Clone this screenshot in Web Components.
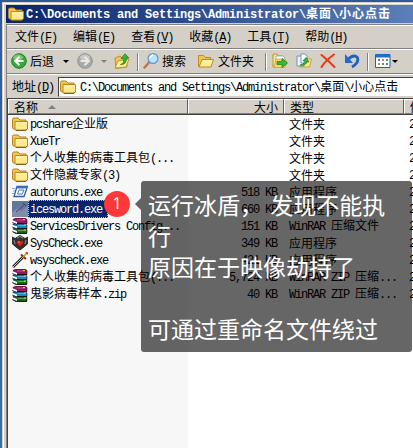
<!DOCTYPE html>
<html lang="zh-CN">
<head>
<meta charset="utf-8">
<title>Explorer</title>
<style>
html,body{margin:0;width:413px;height:448px;overflow:hidden;background:#3a6ea5}
</style>
</head>
<body>
<explorer-window></explorer-window>
<script>
const path = 'C:\\Documents and Settings\\Administrator\\桌面\\小心点击';

class PixelIcon extends HTMLElement {
  connectedCallback() {
    const folder = `<path d="M.5 3.5Q.5 2 2 2h4l2 2h6v9H2Q.5 13 .5 11z" fill="#f5c54b" stroke="#b58422"/><path d="M3 5.500h12.500v7L14 14H3z" fill="#ffe98d" stroke="#b98a22"/><path d="M4 7h10.500" stroke="#fff8c8"/><path d="M4 14.500h10l1.500-2" stroke="#80601c" fill="none"/>`;
    const openFolder = `<path d="M.5 13.500V2.500h5l1.500 2h5.500v3" fill="#f5c54b" stroke="#c08d25"/><path d="M1 14 4 6.500h11.500L13 14z" fill="#ffec91" stroke="#b98a22"/><path d="M5 8h9" stroke="#fffbd2"/>`;
    const rar = `<path d="M1 1.500 4 0h9l2 1.500v4L13 6H4L1 4.500z" fill="#97145e" stroke="#300" stroke-width=".6"/><path d="M1 6h12l2 1v3.500H4L1 9z" fill="#168ac5" stroke="#013" stroke-width=".6"/><path d="M1 10.500h12l2 1V15l-1 .7H4L1 14z" fill="#187018" stroke="#020" stroke-width=".6"/><path d="M0 2l5 2v2L0 4zM0 6.700l5 1.700v2L0 8.500zM0 11l5 2v2l-5-2z" fill="#fff"/><path d="M0 4.500l5 2M0 9l5 2M0 13.500l5 2" stroke="#222" stroke-width=".6"/><path d="M5 5.500h10M5 10.500h10M5 15.300h10" stroke="#111"/><path d="M5 2h8M6 7.500h8M6 12.500h8" stroke="#fff" stroke-opacity=".4" stroke-width=".8"/><path d="M11 1.500h2M12 7h2M12 12h2" stroke="#e0c34a"/>`;
    const green = `stroke="#187d1b" stroke-width=".7" fill="#38b838"`;
    const art = {
      folder, rar, openFolder,
      back: `<circle cx="8" cy="8" r="7.300" fill="#36a936" stroke="#1e8425"/><ellipse cx="7" cy="4.500" rx="5" ry="3" fill="#8bdc79" opacity=".7"/><path d="M8.500 3.800 4.300 8l4.200 4.200M4.800 8h7.700" stroke="#fff" stroke-width="2.200" fill="none"/>`,
      forward: `<circle cx="8" cy="8" r="7.300" fill="#a8a8a6" stroke="#92928f"/><ellipse cx="8" cy="4.500" rx="5" ry="3" fill="#c8c8c6"/><path d="M7.500 3.800 11.700 8l-4.200 4.200M11.200 8H3.500" stroke="#e8e8e6" stroke-width="2.200" fill="none"/>`,
      up: `<path d="M1 5l5-2 2 2h5v9l-11 1.500z" fill="#f0c64f" stroke="#b28425" stroke-width=".8"/><path d="M1 15 4 8l11-2-3 8z" fill="#ffec91" stroke="#b98a22" stroke-width=".8"/><path d="M6.500 11.500q4-1 3-6H7L11 .7 14.800 5h-2.500q.5 7-5.800 6.500z" ${green}/>`,
      search: `<path d="M6 9.500 1.500 14.500" stroke="#b87856" stroke-width="2.600" stroke-linecap="round"/><circle cx="10" cy="5.500" r="4.900" fill="#b9e4fa" stroke="#6594d4" stroke-width="1.200"/><path d="M7 5q.5-2.500 3-3" stroke="#fff" stroke-width="1.500" fill="none"/>`,
      move: `<path d="M1 1h4l1 2h5v11H1z" fill="#ffe786" stroke="#c19425"/><path d="M4 3h7l2 2v7H4z" fill="#fff" stroke="#8fa6ca" stroke-width=".8"/><path d="M2 14.500 4 6h9l2 3-2 5.500z" fill="#f7d860" stroke="#c19425" stroke-width=".6"/><path d="M5 8.500h5V5.500l5.500 4.500-5.500 4.500v-3H5z" ${green}/>`,
      copy: `<path d="M7 5h4l1 1h3.500l-2 8H4V8z" fill="#ffe786" stroke="#c19425" stroke-width=".8"/><path d="M1 3h5l2 2v8H1z" fill="#e7f3ff" stroke="#5e83b8" stroke-width=".8"/><path d="M5 1h4l2 2v7H5z" fill="#fff" stroke="#5e83b8" stroke-width=".8"/><path d="M4 12q4 0 5-4l-2-.2 3-3.300L13 9l-2-.4q-2 5-7 3.400z" ${green} stroke-width=".5"/>`,
      del: `<path d="M1.500 2q5 4 13 12M14 1.500Q6 7 1.500 14" stroke="#e73a16" stroke-width="2.100" fill="none" stroke-linecap="round"/>`,
      undo: `<path d="M4 6.500Q9 1 13 4q3 5-5 10" stroke="#2061c4" stroke-width="2.800" fill="none"/><path d="M1 1v9h8z" fill="#2868cb"/>`,
      views: `<path d="M.5 1.500h14.500v13H.5z" fill="#fff" stroke="#2060ba"/><path d="M1 3h14" stroke="#246cd1" stroke-width="3"/><path d="M3 6h2v2H3zM11 10h2v2h-2z" fill="#477fc1"/><path d="M7 6h2v2H7zM3 10h2v2H3z" fill="#cc805c"/><path d="M11 6h2v2h-2zM7 10h2v2H7z" fill="#4a9f5a"/>`,
      app: `<path d="M5 2.500h10.500L12 12.500H2z" fill="#fff" stroke="#315c9f" stroke-width="1.300"/><path d="M5 2.500h10L14.300 4.500H4.500z" fill="#3c75bd"/><path d="M7 6h5l-1.700 4H5.500z" fill="#fff" stroke="#4575b5"/><path d="M0 4.500h3M1 7h2M0 9.500h2" stroke="#6792b8" stroke-width=".8"/>`,
      ice: `<path d="M0 0h16v16H0z" fill="#64779b"/><path d="M0 11 6 7l3 3 7-5v11H0z" fill="#7f8da9"/><path d="M4 11 13 3" stroke="#35486d"/><path d="M11 2l3 3" stroke="#293b60"/>`,
      shield: `<path d="M0 2l3 1.500 5-3 5 3L16 2l-.5 7-3.500 3-4 3-4-3L.5 9z" fill="#303330" stroke="#111" stroke-width=".8"/><path d="M2 5l1 4M14 5l-1 4M5 3l3-1.500L11 3" stroke="#93968b"/><path d="M8 12 4.500 8V6.500L6 5.500l2 1 2-1 1.500 1V8z" fill="#d32818" stroke="#771009" stroke-width=".8"/><path d="M6 7h2" stroke="#ff987d"/>`,
      sword: `<path d="M1 15 11 5" stroke="#222" stroke-width="2.600"/><path d="M1 15 11 5" stroke="#c7c7c1" stroke-width="1"/><path d="M9 2.500l5 4.500" stroke="#823018" stroke-width="1.800"/><path d="M11 5l4-4" stroke="#e38b22" stroke-width="1.600"/><path d="M14 0l2 2" stroke="#a53220" stroke-width="1.500"/>`
    };
    this.attachShadow({mode:'open'}).innerHTML = `<style>:host{display:block;width:16px;height:16px;flex:none}svg{display:block}</style><svg width="16" height="16" viewBox="0 0 16 16" fill="none">${art[this.getAttribute('name')]}</svg>`;
  }
}
customElements.define('pixel-icon', PixelIcon);

// Text on a half-width / full-width grid: 6px Latin cells and 12px Han cells.
class GridText extends HTMLElement {
  connectedCallback() {
    const esc = s => s.replace(/&/g,'&amp;').replace(/</g,'&lt;');
    const key = this.getAttribute('key');
    const runs = (this.getAttribute('text') || '').match(/[\x00-\x7f]+|[^\x00-\x7f]+/g) || [];
    const html = runs.map(r => r.charCodeAt(0) < 128
      ? `<span class="l">${key ? esc(r).replace(key, `<u>${key}</u>`) : esc(r)}</span>` : `<span>${esc(r)}</span>`).join('');
    this.attachShadow({mode:'open'}).innerHTML = `<style>:host{display:block;white-space:pre;font:12px/16px "Noto Sans CJK SC",sans-serif;flex:none;letter-spacing:var(--han-gap,0);font-weight:var(--weight,400)}.l{font-family:"Liberation Mono",monospace;font-size:12px;letter-spacing:var(--latin-gap,-1.2px)}u{text-underline-offset:1px}</style>${html}`;
  }
}
customElements.define('grid-text', GridText);

class TitleBar extends HTMLElement {
  connectedCallback() {
    this.attachShadow({mode:'open'}).innerHTML = `<style>:host{display:flex;align-items:center;height:18px;padding-left:2px;gap:2px;background:linear-gradient(90deg,#0a246a,#5b7fb8);color:#fff;--han-gap:1px;--latin-gap:-.2px;--weight:700}</style><pixel-icon name="folder"></pixel-icon><grid-text text="${path}"></grid-text>`;
  }
}
customElements.define('title-bar', TitleBar);

class MenuBar extends HTMLElement {
  connectedCallback() {
    this.attachShadow({mode:'open'}).innerHTML = `<style>:host{display:flex;box-sizing:border-box;height:24px;align-items:center;gap:16px;padding-left:8px;border-top:1px solid #fff;border-bottom:1px solid #808080}</style>` +
      [['文件','F'],['编辑','E'],['查看','V'],['收藏','A'],['工具','T'],['帮助','H']].map(([t,k]) => `<grid-text text="${t}(${k})" key="${k}"></grid-text>`).join('');
  }
}
customElements.define('menu-bar', MenuBar);

class ToolBar extends HTMLElement {
  connectedCallback() {
    const i = (n,m=0) => `<pixel-icon name="${n}" style="margin-left:${m}px"></pixel-icon>`;
    const t = (s,m=4) => `<grid-text text="${s}" style="margin-left:${m}px"></grid-text>`;
    const a = (m,c='') => `<b class="${c}" style="margin-left:${m}px"></b>`;
    const s = m => `<i style="margin-left:${m}px"></i>`;
    this.attachShadow({mode:'open'}).innerHTML = `<style>:host{display:flex;box-sizing:border-box;height:25px;align-items:center;padding-left:4px;border-top:1px solid #fff;border-bottom:1px solid #808080}b{border:3px solid transparent;border-top-color:#000;border-bottom:0;flex:none}.off{border-top-color:#808080}i{height:18px;border-left:1px solid #808080;border-right:1px solid #fff;flex:none}pixel-icon,grid-text{position:relative;top:-1px}</style>` +
      i('back')+t('后退',3)+a(9)+i('forward',8)+a(8,'off')+i('up',7)+s(7)+i('search',4)+t('搜索',3)+i('openFolder',12)+t('文件夹',4)+s(11)+i('move',5)+i('copy',8)+i('del',8)+i('undo',8)+s(7)+i('views',6)+a(1);
  }
}
customElements.define('tool-bar', ToolBar);

class AddressBar extends HTMLElement {
  connectedCallback() {
    this.attachShadow({mode:'open'}).innerHTML = `<style>:host{display:flex;box-sizing:border-box;height:24px;align-items:center;padding-left:5px;border-top:1px solid #fff}div{display:flex;flex:1;align-items:center;gap:4px;margin-left:4px;padding-left:1px;height:20px;box-sizing:border-box;background:#fff;border:1px solid #808080;border-top-color:#404040;border-left-color:#404040;border-right:0;border-bottom-color:#d4d0c8;overflow:hidden}</style><grid-text text="地址(D)" key="D"></grid-text><div><pixel-icon name="folder"></pixel-icon><grid-text text="${path}"></grid-text></div>`;
  }
}
customElements.define('address-bar', AddressBar);

class FileRow extends HTMLElement {
  connectedCallback() {
    const g = n => this.getAttribute(n) || '';
    this.attachShadow({mode:'open'}).innerHTML = `<style>:host{display:grid;grid-template-columns:179px 97px 120px 12px;height:17px;align-items:center}.n{display:flex;height:17px;align-items:center;padding-left:4px}.t{padding:0 2px}.s{justify-self:end;padding-right:7px}.k,.d{padding-left:5px}.sel{background:#0a246a;color:#fff;outline:1px dotted #e8bf58;outline-offset:-1px;padding-right:6px}</style><div class="n"><pixel-icon name="${g('icon')}"></pixel-icon><grid-text class="t ${this.hasAttribute('selected')?'sel':''}" text="${g('name')}"></grid-text></div><grid-text class="s" text="${g('size')}"></grid-text><grid-text class="k" text="${g('kind')}"></grid-text><grid-text class="d" text="2"></grid-text>`;
  }
}
customElements.define('file-row', FileRow);

class ListHeader extends HTMLElement {
  connectedCallback() {
    this.attachShadow({mode:'open'}).innerHTML = `<style>:host{display:grid;grid-template-columns:180px 96px 120px 20px;height:16px;box-sizing:border-box;background:#d4d0c8;border-bottom:1px solid #404040}div{display:flex;align-items:center;box-sizing:border-box;height:15px;padding:0 5px;border:1px solid #fff;border-right-color:#606060;border-bottom-color:#808080}div.r{justify-content:flex-end}b{margin-left:10px;border:4px solid transparent;border-top:0;border-bottom-color:#808080}</style><div><grid-text text="名称"></grid-text><b></b></div><div class="r"><grid-text text="大小"></grid-text></div><div><grid-text text="类型"></grid-text></div><div><grid-text text="修"></grid-text></div>`;
  }
}
customElements.define('list-header', ListHeader);

class FileList extends HTMLElement {
  connectedCallback() {
    const rows = [['folder','pcshare企业版','','文件夹'],['folder','XueTr','','文件夹'],['folder','个人收集的病毒工具包(...','','文件夹'],['folder','文件隐藏专家(3)','','文件夹'],['app','autoruns.exe','518 KB','应用程序'],['ice','icesword.exe','660 KB','应用程序'],['rar','ServicesDrivers Config...','151 KB','WinRAR 压缩文件'],['shield','SysCheck.exe','349 KB','应用程序'],['sword','wsyscheck.exe','421 KB','应用程序'],['rar','个人收集的病毒工具包(...','5,724 KB','WinRAR ZIP 压缩...'],['rar','鬼影病毒样本.zip','40 KB','WinRAR ZIP 压缩...']];
    this.attachShadow({mode:'open'}).innerHTML = `<style>:host{display:block;flex:1;background:linear-gradient(90deg,#f7f7f7 180px,#fff 180px)}</style><list-header></list-header>` + rows.map((r,i) => `<file-row icon="${r[0]}" name="${r[1]}" size="${r[2]}" kind="${r[3]}" ${i===5?'selected':''}></file-row>`).join('');
  }
}
customElements.define('file-list', FileList);

class StepNote extends HTMLElement {
  connectedCallback() {
    this.attachShadow({mode:'open'}).innerHTML = `<style>:host{position:absolute;left:141px;top:181px;width:271px;height:171px;box-sizing:border-box;padding:8px 0 0 7px;background:rgba(0,0,0,.6);border-radius:3px;color:#fff;font:23px/31px "Noto Sans CJK SC",sans-serif;word-spacing:2px;white-space:pre}:host::before{content:"";position:absolute;left:-6px;top:17px;border:6px solid transparent;border-left:0;border-right-color:rgba(0,0,0,.6)}</style><slot></slot>`;
  }
}
customElements.define('step-note', StepNote);

class StepBadge extends HTMLElement {
  connectedCallback() {
    this.attachShadow({mode:'open'}).innerHTML = `<style>:host{position:absolute;left:104px;top:191px;width:26px;height:26px;border-radius:50%;background:#fd3838;color:#fff;font:16px/24px "Open Sans",sans-serif;text-align:center}</style><slot></slot>`;
  }
}
customElements.define('step-badge', StepBadge);

class ExplorerWindow extends HTMLElement {
  connectedCallback() {
    this.attachShadow({mode:'open'}).innerHTML = `<style>:host{display:block;position:relative;width:413px;height:448px;overflow:hidden;padding:2px 0 0 2px;box-sizing:border-box;background:linear-gradient(#2e5a9b,#3a6ea5);color:#000}main{display:flex;flex-direction:column;box-sizing:border-box;height:446px;background:#d4d0c8;border-top:1px solid #d4d0c8;border-left:1px solid #d4d0c8;box-shadow:inset 1px 1px #fff;padding:2px 0 0 3px}section{display:flex;flex-direction:column;flex:1;margin-top:1px;border-left:1px solid #808080;border-top:1px solid #808080}file-list{border-left:1px solid #404040;border-top:1px solid #404040}</style><main><title-bar></title-bar><section><menu-bar></menu-bar><tool-bar></tool-bar><address-bar></address-bar><file-list></file-list></section></main><step-note>运行冰盾， 发现不能执
行
原因在于映像劫持了

可通过重命名文件绕过</step-note><step-badge>1</step-badge>`;
  }
}
customElements.define('explorer-window', ExplorerWindow);
</script>
</body>
</html>
